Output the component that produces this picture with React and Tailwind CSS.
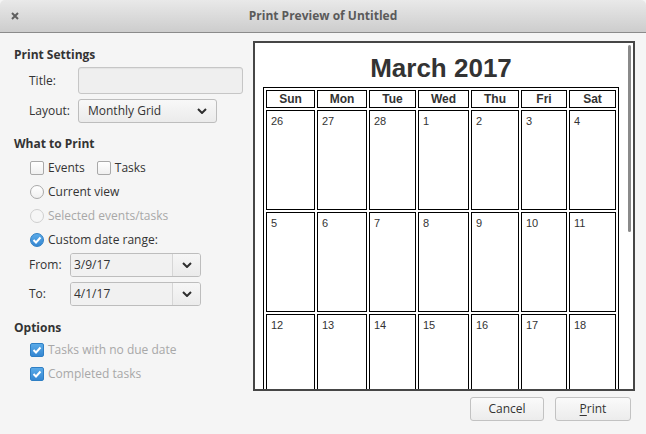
import React from 'react';

const WEEKDAYS = ['Sun', 'Mon', 'Tue', 'Wed', 'Thu', 'Fri', 'Sat'];
const WEEKS = [
  [26, 27, 28, 1, 2, 3, 4],
  [5, 6, 7, 8, 9, 10, 11],
  [12, 13, 14, 15, 16, 17, 18],
];

function Chevron() {
  return (
    <svg width="10" height="6" viewBox="0 0 10 6" fill="none">
      <path d="M1 1l4 4 4-4" stroke="#2e2e2e" strokeWidth="2" />
    </svg>
  );
}

function Tick() {
  return (
    <svg width="10" height="8" viewBox="0 0 10 8" fill="none">
      <path d="M1.5 4l2.5 2.5L8.5 1.5" stroke="white" strokeWidth="2" />
    </svg>
  );
}

function Check({ checked, className = '' }) {
  if (checked) {
    return (
      <span className={'w-[14px] h-[14px] rounded-[2px] border border-[#2f7fc4] bg-gradient-to-b from-[#5aaae8] to-[#3587d2] flex items-center justify-center shrink-0 ' + className}>
        <Tick />
      </span>
    );
  }
  return <span className={'block w-[14px] h-[14px] rounded-[2px] border border-[#a9a9a9] bg-gradient-to-b from-white to-[#f0f0f0] shrink-0 ' + className} />;
}

function Radio({ checked, disabled }) {
  if (checked) {
    return (
      <span className="w-[14px] h-[14px] rounded-full border border-[#2f7fc4] bg-gradient-to-b from-[#5aaae8] to-[#3587d2] flex items-center justify-center shrink-0">
        <Tick />
      </span>
    );
  }
  return (
    <span
      className={
        disabled
          ? 'block w-[14px] h-[14px] rounded-full border border-[#cfcfcf] bg-[#f6f6f6] shrink-0'
          : 'block w-[14px] h-[14px] rounded-full border border-[#a9a9a9] bg-gradient-to-b from-white to-[#f0f0f0] shrink-0'
      }
    />
  );
}

function DateCombo({ label, value, className }) {
  return (
    <div className={'flex items-center pl-[15px] ' + className}>
      <span className="w-[41px]">{label}</span>
      <div className="w-[131px] h-[24px] flex rounded-[3px] border border-[#bdbdbd] overflow-hidden">
        <div className="flex-1 bg-[#f1f1f1] pl-[3px] flex items-center text-[#333]">{value}</div>
        <div className="w-[28px] border-l border-[#d6d6d6] bg-gradient-to-b from-[#f6f6f6] to-[#ebebeb] flex items-center justify-center">
          <Chevron />
        </div>
      </div>
    </div>
  );
}

export default function App() {
  return (
    <div className="w-[646px] h-[434px] flex flex-col bg-[#f5f5f5] text-[12px] text-[#333] font-['Open_Sans',sans-serif] overflow-hidden">
      {/* title bar */}
      <div className="h-[33px] shrink-0 relative flex items-center justify-center rounded-t-[5px] border-b border-[#8b8b8b] bg-gradient-to-b from-[#e9e9e9] to-[#cdcdcd]">
        <svg className="absolute left-[11px] top-[12px]" width="8" height="8" viewBox="0 0 8 8">
          <path d="M1 1l6 6M7 1L1 7" stroke="#5f5f5f" strokeWidth="2" />
        </svg>
        <span className="font-bold text-[#5a5a5a]">Print Preview of Untitled</span>
      </div>

      <div className="flex flex-1">
        {/* settings column */}
        <div className="w-[253px] shrink-0 pl-[14px] pt-[13px] flex flex-col">
          <div className="h-[18px] flex items-center font-bold">Print Settings</div>

          <div className="mt-[3px] h-[27px] flex items-center pl-[15px]">
            <span className="w-[49px]">Title:</span>
            <div className="w-[165px] h-[27px] rounded-[3px] border border-[#c6c6c6] bg-[#efefef] shadow-[inset_0_1px_1px_rgba(0,0,0,0.05)]" />
          </div>

          <div className="mt-[5px] h-[24px] flex items-center pl-[15px]">
            <span className="w-[49px]">Layout:</span>
            <div className="w-[139px] h-[24px] rounded-[3px] border border-[#bdbdbd] bg-gradient-to-b from-[#f8f8f8] to-[#ebebeb] flex items-center justify-between pl-[9px] pr-[9px]">
              <span>Monthly Grid</span>
              <Chevron />
            </div>
          </div>

          <div className="mt-[12px] h-[18px] flex items-center font-bold">What to Print</div>

          <div className="mt-[3px] h-[24px] flex items-center pl-[16px]">
            <Check />
            <span className="ml-[4px]">Events</span>
            <Check className="ml-[12px]" />
            <span className="ml-[4px]">Tasks</span>
          </div>
          <div className="h-[24px] flex items-center pl-[16px] gap-[4px]">
            <Radio />
            <span>Current view</span>
          </div>
          <div className="h-[24px] flex items-center pl-[16px] gap-[4px] text-[#a8a8a8]">
            <Radio disabled />
            <span>Selected events/tasks</span>
          </div>
          <div className="h-[24px] flex items-center pl-[16px] gap-[4px]">
            <Radio checked />
            <span>Custom date range:</span>
          </div>

          <DateCombo label="From:" value="3/9/17" className="mt-[1px]" />
          <DateCombo label="To:" value="4/1/17" className="mt-[5px]" />

          <div className="mt-[13px] h-[18px] flex items-center font-bold">Options</div>
          <div className="mt-[1px] h-[24px] flex items-center pl-[16px] gap-[4px] text-[#a8a8a8]">
            <Check checked />
            <span>Tasks with no due date</span>
          </div>
          <div className="h-[24px] flex items-center pl-[16px] gap-[4px] text-[#a8a8a8]">
            <Check checked />
            <span>Completed tasks</span>
          </div>
        </div>

        {/* preview column */}
        <div className="w-[382px] shrink-0 flex flex-col pt-[8px]">
          <div className="relative h-[350px] border-2 border-[#464646] bg-white overflow-hidden pl-[8px] font-['Liberation_Sans',Arial,sans-serif] text-[#333]">
            <h1 className="w-[356px] mt-[10px] h-[30px] leading-[30px] text-center text-[26px] font-bold">March 2017</h1>
            <div className="mt-[4px] w-[356px] grid grid-cols-[49px_50px_47px_51px_48px_46px_47px] gap-[2px] p-[2px] border border-black">
              {WEEKDAYS.map((d) => (
                <div key={d} className="h-[18px] border border-black flex items-center justify-center text-[12px] font-bold">
                  {d}
                </div>
              ))}
              {WEEKS.flat().map((n, i) => (
                <div key={i} className="h-[100px] border border-black pl-[4px] pt-[4px] text-[11px] leading-[13px]">
                  {n}
                </div>
              ))}
            </div>
            <div className="absolute right-[2px] top-[2px] w-[3px] h-[187px] rounded-full bg-[#8a8a8a]" />
          </div>

          <div className="mt-[6px] pr-[4px] flex justify-end gap-[11px]">
            <button className="w-[74px] h-[24px] rounded-[3px] border border-[#c2c2c2] bg-gradient-to-b from-[#fafafa] to-[#ececec] text-[#333]">
              Cancel
            </button>
            <button className="w-[76px] h-[24px] rounded-[3px] border border-[#c2c2c2] bg-gradient-to-b from-[#fafafa] to-[#ececec] text-[#333]">
              <span className="underline underline-offset-2">P</span>rint
            </button>
          </div>
        </div>
      </div>
    </div>
  );
}
